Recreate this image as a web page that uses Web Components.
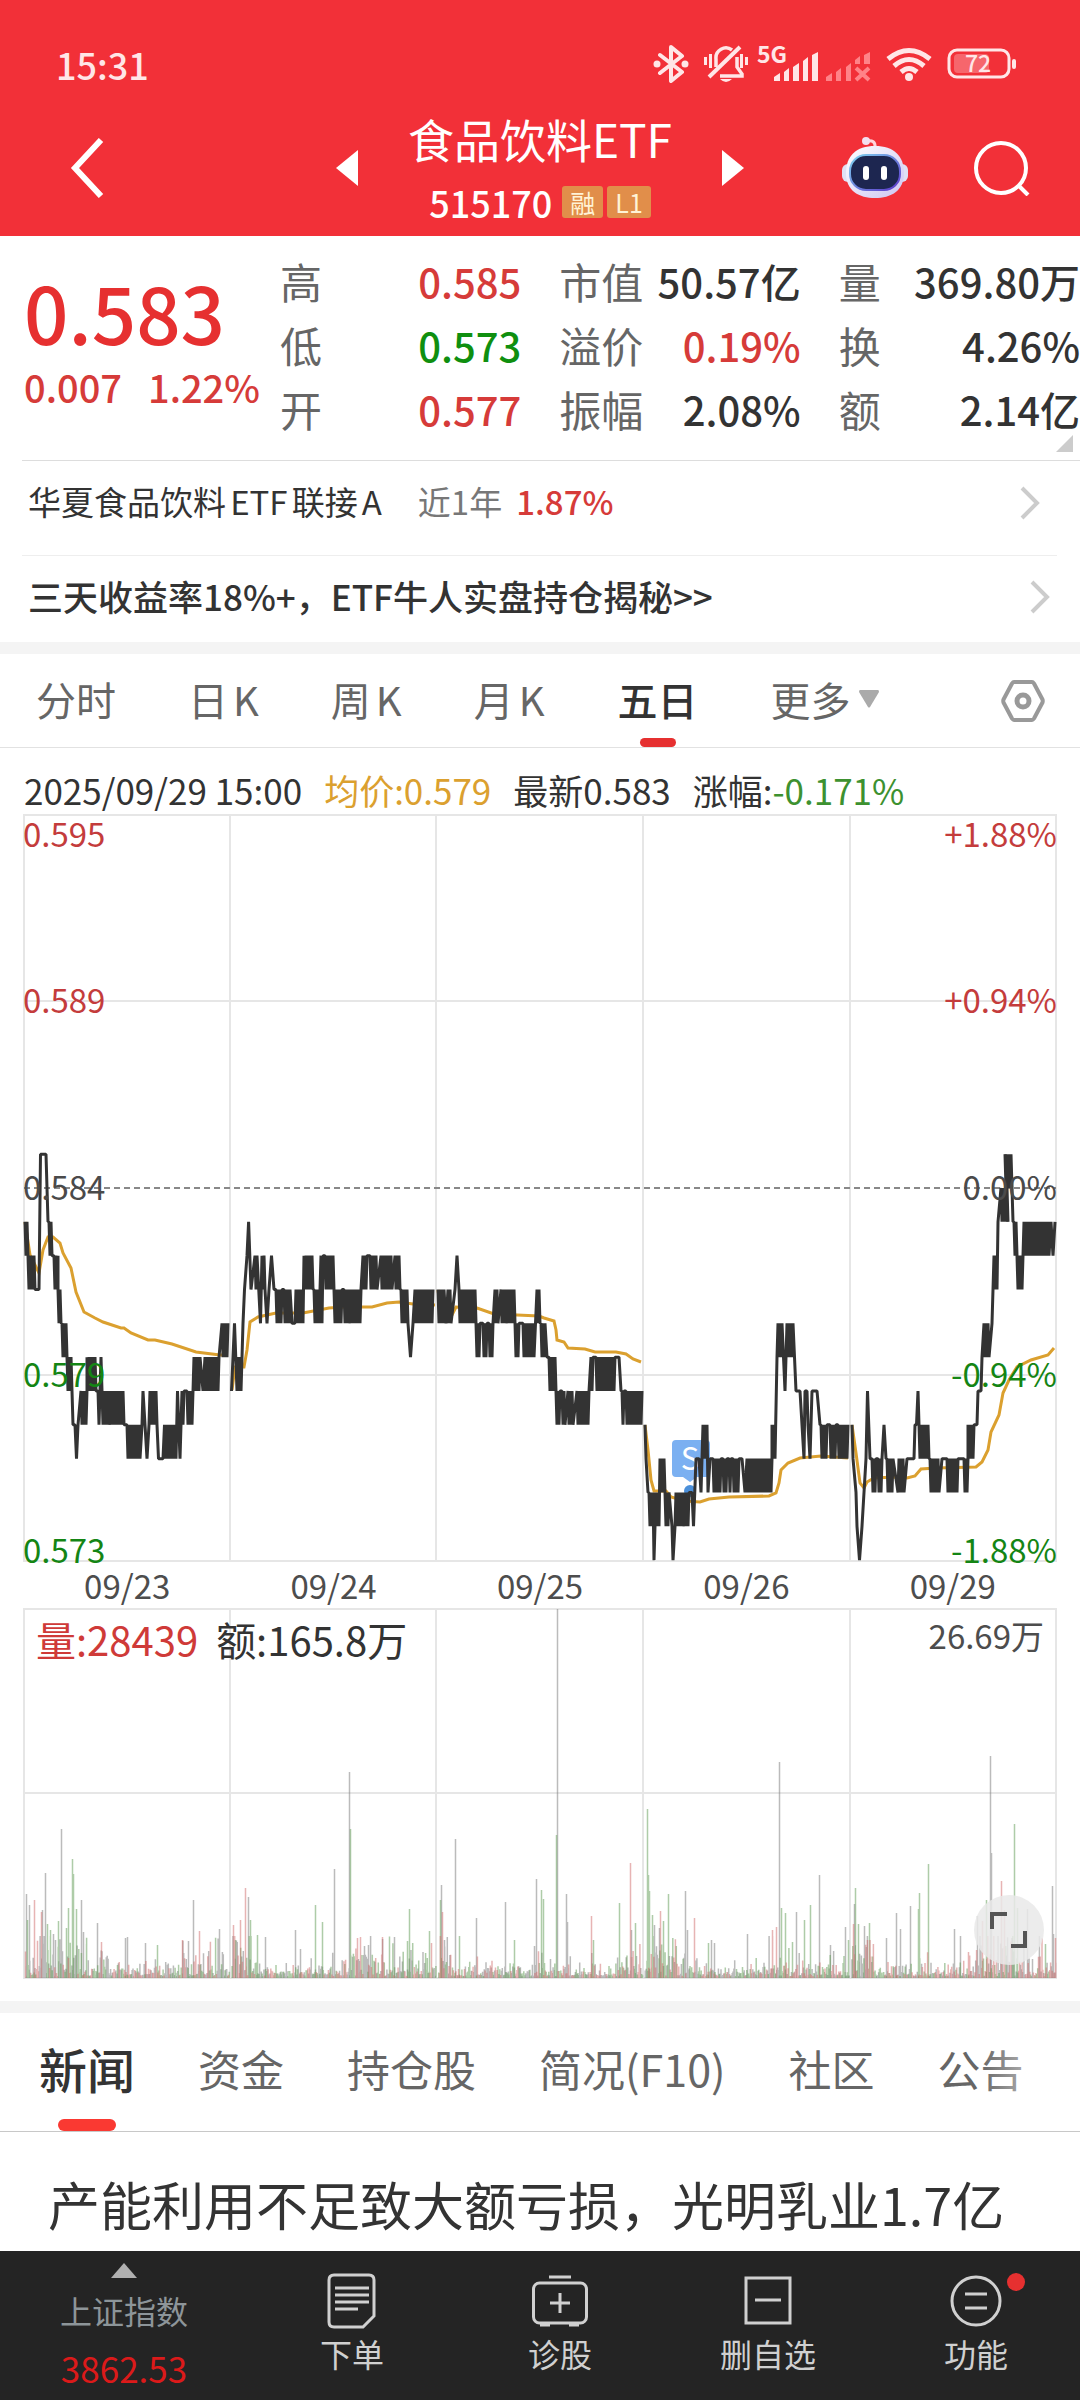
<!DOCTYPE html>
<html lang="zh-CN">
<head>
<meta charset="utf-8">
<meta name="viewport" content="width=device-width, initial-scale=1">
<title>食品饮料ETF 515170</title>
<style>
    body{
        margin: 0;
        height: 100vh;
        display: flex;
        flex-direction: column;
        background: #fff;
        color: #333;
        font-family: "Noto Sans CJK SC", "Noto Sans", sans-serif;
        text-autospace: no-autospace;
    }

    main{
        flex: 1;
        min-height: 0;
        overflow: hidden;
    }
</style>
</head>
<body>
    <stock-header name="食品饮料ETF" code="515170"></stock-header>
    <main>
        <quote-panel price="0.583" change="0.007" percent="1.22%"></quote-panel>
        <promo-row class="fund">华夏食品饮料ETF联接A<span slot="label">近1年</span><span slot="value">1.87%</span></promo-row>
        <promo-row class="tip">三天收益率18%+，ETF牛人实盘持仓揭秘&gt;&gt;</promo-row>
        <section-band></section-band>
        <period-tabs></period-tabs>
        <price-chart></price-chart>
        <volume-chart></volume-chart>
        <section-band></section-band>
        <news-tabs></news-tabs>
        <news-item>产能利用不足致大额亏损，光明乳业1.7亿</news-item>
    </main>
    <bottom-nav></bottom-nav>

<script>
"use strict"

class BaseElement extends HTMLElement{
    constructor(){
        super();

        this.attachShadow({mode: "open"});
    }

    connectedCallback(){
        this.shadowRoot.innerHTML = `${this.styles()} ${this.render()}`;
    }

    resets(){
        return `
        *{ box-sizing: border-box; }
        svg{ display: block; flex: none; }
        button{
            margin: 0;
            padding: 0;
            border: 0;
            background: none;
            color: inherit;
            font: inherit;
            cursor: pointer;
        }
        a{ color: inherit; text-decoration: none; }
        `
    }
}

class StatusBar extends BaseElement{
    render(){
        return `
            <time>15:31</time>
            <div class="icons">
                <svg width="36" height="38" viewBox="0 0 36 38" fill="none" stroke="#ffe6e7" stroke-width="4" stroke-linejoin="round" stroke-linecap="round">
                    <path d="M7 10 L29 27 L18 36 V2 L29 11 L7 28"/>
                    <circle cx="4" cy="19" r="3.5" fill="#ffe6e7" stroke="none"/>
                    <circle cx="32" cy="19" r="3.5" fill="#ffe6e7" stroke="none"/>
                </svg>
                <svg width="44" height="38" viewBox="0 0 44 38" fill="none" stroke="#ffe6e7" stroke-width="3.5">
                    <path d="M12 22 V14 a10 10 0 0 1 16 -9 M33 12 V22 l5 7 v2 H16"/>
                    <path d="M5 32 L36 2" stroke-width="4"/>
                    <path d="M16 34 h12 q-6 6 -12 0z" fill="#ffe6e7" stroke="none"/>
                    <path d="M1.500 12v8 M6.500 9v14 M37.500 9v14 M42.500 12v8" stroke-width="3"/>
                </svg>
                <svg width="108" height="38" viewBox="0 0 108 38" overflow="visible" fill="#ffe6e7">
                    <text x="-6" y="18" font-size="23" font-weight="700">5G</text>
                    <path d="M11 32l6-4v8h-6z M21 27l5-4v13h-5z M30 22l6-4v18h-6z M40 16l5-4v24h-5z M49 10l6-3v29h-6z"/>
                    <g fill="#ff8388">
                        <path d="M63 32l6-4v8h-6z M73 27l5-4v13h-5z M83 22l5-4v18h-5z M92 15l5-4v8h-5z M101 10l6-3v12h-6z"/>
                        <path d="M93 23l13 12M106 23l-13 12" stroke="#ff8388" stroke-width="4"/>
                    </g>
                </svg>
                <svg width="46" height="38" viewBox="0 0 46 38" fill="none" stroke="#ffe6e7" stroke-width="5">
                    <path d="M2 14 q21 -17 42 0 M8 21 q15 -13 30 0 M15 27 q8 -7 16 0"/>
                    <circle cx="23" cy="32" r="4" fill="#ffe6e7" stroke="none"/>
                </svg>
                <svg width="69" height="38" viewBox="0 0 69 38">
                    <rect x="2" y="5" width="60" height="27" rx="8" fill="none" stroke="#ffe6e7" stroke-width="3"/>
                    <rect x="7" y="9" width="35" height="19" rx="4" fill="#f6666c"/>
                    <rect x="65" y="14" width="4" height="10" rx="2" fill="#ffe6e7"/>
                    <text x="31" y="27" font-size="23" font-weight="500" text-anchor="middle" fill="#ffe6e7">72</text>
                </svg>
            </div>
        `
    }

    styles(){
        return `
        <style>
        ${this.resets()}
        :host{
            display: flex;
            justify-content: space-between;
            align-items: center;
            height: 88px;
            padding: 40px 64px 0 56px;
            box-sizing: border-box;
            color: #ffe6e7;
        }

        time{ font-size: 36px; line-height: 48px; font-weight: 500; }
        .icons{ display: flex; gap: 15px; }
        </style>
        `
    }
}

class StockHeader extends BaseElement{
    render(){
        return `
            <status-bar></status-bar>
            <nav>
                <button class="back" aria-label="返回">
                    <svg width="34" height="60" viewBox="0 0 34 60" fill="none" stroke="#fff" stroke-width="6"><path d="M31 2 L5 30 L31 58"/></svg>
                </button>
                <div class="switcher">
                    <button aria-label="上一只"><svg width="22" height="36" viewBox="0 0 22 36" fill="#fff"><path d="M22 0V36L0 18z"/></svg></button>
                    <div class="title">
                        <h1>${this.getAttribute('name')}</h1>
                        <p>${this.getAttribute('code')}<span class="badges"><i>融</i><i>L1</i></span></p>
                    </div>
                    <button aria-label="下一只"><svg width="22" height="36" viewBox="0 0 22 36" fill="#fff"><path d="M0 0V36L22 18z"/></svg></button>
                </div>
                <div class="tools">
                    <button aria-label="智能助手">
                        <svg width="66" height="62" viewBox="0 0 66 62">
                            <defs>
                                <linearGradient id="shell" x1="0" y1="0" x2="1" y2="1">
                                    <stop offset="0" stop-color="#fff"/><stop offset="1" stop-color="#cdc5f2"/>
                                </linearGradient>
                                <linearGradient id="rim" x1="0" y1="0" x2="1" y2="1">
                                    <stop offset="0" stop-color="#7fd4f0"/><stop offset="1" stop-color="#5b35c9"/>
                                </linearGradient>
                            </defs>
                            <path d="M24 4 q10 -2 9 7" fill="none" stroke="#ffd5dc" stroke-width="3"/>
                            <circle cx="24" cy="4" r="4" fill="#f3dff0"/>
                            <rect x="0" y="27" width="66" height="18" rx="6" fill="#dfe0f4"/>
                            <path d="M33 9 C52 9 62 19 62 36 C62 54 49 61 33 61 C17 61 4 54 4 36 C4 19 14 9 33 9z" fill="url(#shell)"/>
                            <rect x="8" y="18" width="50" height="35" rx="16" fill="#1d2650" stroke="url(#rim)" stroke-width="2"/>
                            <rect x="21" y="29" width="6" height="14" rx="3" fill="#fff"/>
                            <rect x="39" y="29" width="6" height="14" rx="3" fill="#fff"/>
                        </svg>
                    </button>
                    <button aria-label="搜索">
                        <svg width="56" height="56" viewBox="0 0 56 56" fill="none" stroke="#fff" stroke-width="4"><circle cx="27" cy="28" r="25"/><path d="M44 45 L54 55"/></svg>
                    </button>
                </div>
            </nav>
        `
    }

    styles(){
        return `
        <style>
        ${this.resets()}
        :host{ display: block; background: #f23038; color: #fff; }

        nav{
            display: grid;
            grid-template-columns: 1fr auto 1fr;
            align-items: center;
            height: 148px;
            padding: 12px 50px 0;
        }

        .back{ justify-self: start; padding-left: 20px; }
        .switcher{ display: flex; align-items: center; gap: 50px; }
        .title{ padding-bottom: 4px; text-align: center; }
        h1{ margin: 0 0 12px; font-size: 46px; line-height: 60px; font-weight: 400; }
        p{
            margin: 0;
            display: flex;
            justify-content: center;
            align-items: center;
            gap: 10px;
            font-size: 36px;
            line-height: 44px;
            font-weight: 500;
        }
        .badges{ display: flex; gap: 4px; }
        i{
            min-width: 40px;
            padding: 0 8px;
            border-radius: 3px;
            background: #e18e4a;
            color: #fff3d6;
            font-size: 25px;
            line-height: 32px;
            font-style: normal;
            font-weight: 400;
        }
        .tools{ display: flex; align-items: center; justify-content: flex-end; gap: 66px; }
        </style>
        `
    }
}

class QuotePanel extends BaseElement{
    render(){
        const cols = [
            [["高", "0.585", "up"], ["低", "0.573", "down"], ["开", "0.577", "up"]],
            [["市值", "50.57亿", ""], ["溢价", "0.19%", "up"], ["振幅", "2.08%", ""]],
            [["量", "369.80万", ""], ["换", "4.26%", ""], ["额", "2.14亿", ""]]
        ];

        return `
            <div class="last">
                <strong>${this.getAttribute('price')}</strong>
                <p><span>${this.getAttribute('change')}</span><span>${this.getAttribute('percent')}</span></p>
            </div>
            ${cols.map(col => `
                <dl>${col.map(([k, v, c]) => `<div><dt>${k}</dt><dd class="${c}">${v}</dd></div>`).join("")}</dl>
            `).join("")}
            <svg class="more" width="17" height="17" viewBox="0 0 17 17" fill="#ccc"><path d="M17 0V17H0z"/></svg>
        `
    }

    styles(){
        return `
        <style>
        ${this.resets()}
        :host{
            position: relative;
            display: grid;
            grid-template-columns: 242px 1fr 1fr 1fr;
            column-gap: 38px;
            padding: 13px 0 19px;
        }

        .last{ padding: 18px 0 0 24px; color: #e63030; white-space: nowrap; }
        strong{ display: block; font-size: 78px; line-height: 88px; font-weight: 500; }
        p{
            margin: 8px 0 0;
            display: flex;
            gap: 26px;
            font-size: 38px;
            line-height: 48px;
            font-weight: 500;
            color: #d63b39;
        }
        dl{ margin: 0; }
        dl div{ display: flex; justify-content: space-between; line-height: 64px; white-space: nowrap; }
        dt{ font-size: 42px; color: #666; }
        dd{ margin: 0; font-size: 40px; font-weight: 500; }
        .up{ color: #d63b39; }
        .down{ color: #0f8f0f; }
        .more{ position: absolute; right: 7px; bottom: 8px; }
        </style>
        `
    }
}

class PromoRow extends BaseElement{
    render(){
        return `
            <a href="#">
                <span class="text"><slot></slot><slot name="label"></slot><slot name="value"></slot></span>
                <svg width="20" height="34" viewBox="0 0 20 34" fill="none" stroke="#ccc" stroke-width="4"><path d="M2 2 L17 17 L2 32"/></svg>
            </a>
        `
    }

    styles(){
        return `
        <style>
        ${this.resets()}
        :host{ display: block; margin-left: 22px; border-top: 1px solid #ddd; }
        :host(.fund){ text-autospace: normal; }
        :host(.tip){ margin-right: 23px; border-color: #eee; }

        a{
            display: flex;
            align-items: center;
            justify-content: space-between;
            height: 94px;
            padding: 0 40px 10px 6px;
            font-size: 33px;
            white-space: nowrap;
        }
        :host(.tip) a{
            height: 86px;
            padding: 0 7px 4px 6px;
            font-size: 35px;
            font-weight: 500;
        }
        .text{ padding-bottom: 4px; }
        ::slotted([slot="label"]){ margin-left: 36px; color: #777; text-autospace: no-autospace; }
        ::slotted([slot="value"]){ margin-left: 14px; color: #d63b39; font-weight: 500; }
        </style>
        `
    }
}

class SectionBand extends BaseElement{
    render(){
        return ``
    }

    styles(){
        return `
        <style>
        :host{ display: block; height: 12px; background: #f4f4f4; }
        </style>
        `
    }
}

class PeriodTabs extends BaseElement{
    render(){
        return `
            <button>分时</button>
            <button>日K</button>
            <button>周K</button>
            <button>月K</button>
            <button class="on">五日</button>
            <button class="drop">更多<svg width="20" height="18" viewBox="0 0 20 18" fill="#aaa"><path d="M1 0H19Q20 0 20 2L11 17Q10 18 9 17L0 2Q0 0 1 0z"/></svg></button>
            <button class="set" aria-label="设置">
                <svg width="44" height="42" viewBox="0 0 44 42" fill="none" stroke="#999" stroke-width="4" stroke-linejoin="round">
                    <path d="M13 2H31Q32 2 33 3.500L41.500 19.500Q42 21 41.500 22.500L33 38.500Q32 40 31 40H13Q12 40 11 38.500L2.500 22.500Q2 21 2.500 19.500L11 3.500Q12 2 13 2z"/>
                    <circle cx="22" cy="21" r="6" stroke-width="5"/>
                </svg>
            </button>
        `
    }

    styles(){
        return `
        <style>
        ${this.resets()}
        :host{
            display: flex;
            gap: 73px;
            height: 93px;
            padding: 0 35px 0 36px;
            border-bottom: 1px solid #e2e2e2;
            font-size: 40px;
            color: #666;
            text-autospace: normal;
        }

        button{ position: relative; padding-bottom: 4px; white-space: nowrap; }
        button:nth-child(n + 2):nth-child(-n + 4){ margin-right: -1px; }
        .on{ color: #333; font-weight: 500; }
        .on::after{
            content: "";
            position: absolute;
            left: 50%;
            bottom: 0;
            width: 36px;
            height: 9px;
            margin-left: -18px;
            border-radius: 5px;
            background: #e63030;
        }
        .drop{ display: flex; align-items: center; gap: 8px; }
        .set{ margin-left: auto; padding: 0; }
        </style>
        `
    }
}

// price path: "x,level" is a point, "x-x2,a/b" swings between two price levels
const PRICE = [
    "1-4,1/2 4-11,2/3 12,3 15,3 16.5,-1 22,-1 24,1 25-28,1/2 30-34,2/3 34-37,3/4 38-42,4/5 43-48,5/6 49,7 51,7 52.5,8 54,7 57-63,6/7 63-72,5/6 74-76,6/7 77,5 78-85,6/7 87-100,6/7 103-116,7/8 118,7 119,6 121,7 123,8 125,7 126-133,6/7 134.5,8 139,8 140.5,7 142,8 143-152,7/8 153.5,6 156,8 158-160,6/7 163-168,6/7 170-176,5/6 179,6 181-195,5/6 198-204,4/5",
    "207.5,6 210.5,4 213,6 214-218,5/6 219,4 220.5,3 223,2 224.6,1 227,3 231-233,2/3 236.5,4 238-241,2/3 243,4 245,3 247.5,2 250,3 252-258,3/4 260-266,3/4 268,4 271,4 272-279,3/4 280-289,2/3 290-296,3/4 297-299,2/4 301-309,2/3 310-318,3/4 320-325,3/4 327-337,3/4 339-343,2/3 346-353,2/3 357-368,2/3 371-376,2/3 377-384,3/4 386.5,5 389,4 391-409,3/4",
    "414-420,3/4 422,4 424-427,3/4 431,3 433,2 435-451,3/4 452-456,4/5 459-463,4/5 465-469,4/5 471-474,3/4 477-482,3/4 484-490,3/4 491-495,4/5 497,4 499-510,4/5 513-516,3/4 517-521,4/5 523,5 525-532,5/6 532-536,6/7 538-541,6/7 544-549,6/7 553-565,6/7 567-569,5/6 572-579,5/6 581-591,5/6 595,5 597,6 598-600,6/7 602-618,6/7",
    "621,7 622,8 624,9 625-629,9/10 630,11 632-635,9/10 636-640,8/9 641-645,9/10 648,10 649,11 651,10 652-659,9/10 661-665,9/10 668,9 669.5,10 672,8 675,8 677,9 679-683,7/8 684,9 686,8 689-697,8/9 699-703,8/9 705-707,8/9 709-715,8/9 718,8 721,9 723-736,8/9 738-748,8/9 748-751,7/8 753,5 754-758,4/5 761,6 763-769,4/5 772,6 776,6 778,7 780,8 781,6 783-784,6/7 786,8 788,6 793,6 796,7 797-803,7/8 806-812,7/8 814-824,7/8",
    "828,7 829,8 832,9 833,10 835.5,11 838,10 840,9 842,8 843.5,6 846,8 848-852,8/9 854-857,8/9 858,8 860,7 862,8 863-869,8/9 874,9 875-880,8/9 883,8 890,8 891,7 892.5,7 894,6 895-898,7/8 900-905,7/8 906-915,8/9 918,8 922,8 923-928,8/9 930-934,8/9 938,8 940-944,8/9 944-950,7/8 953,7 954,6 957,6 958,5 960-965,4/5 968,4 969,3 970-973,2/3 974,1 977-984,0/1 981-987,-1/0 988,0 989,1 990-992,1/2 993-999,2/3 1000-1025,1/2 1027,1 1029,2 1031,1"
];

const AVERAGE = [
    "1,407 6,440 15,458 19,435 24,422 29,422 36,428 39,438 47,453 52,477 60,497 71,503 79,507 97,513 100,513 107,518 124,525 131,525 148,529 172,537 196,540 204,540",
    "208,575 211,552 220,552 223,535 226,507 234,502 252,498 279,498 305,493 320,492 348,492 363,488 375,487 389,489 411,490",
    "414,475 417,497 428,500 432,492 453,493 470,499 493,500 515,501 520,503 530,506 532,515 533,525 540,527 544,533 561,534 571,537 592,537 602,539 609,544 617,547",
    "621,610 624,635 627,665 630,676 642,676 647,682 661,686 676,687 685,684 705,682 745,681 752,678 755,668 757,655 764,648 776,643 797,641 824,643",
    "828,610 832,638 836,668 840,673 843,667 850,663 871,662 883,663 891,661 897,654 912,653 952,652 958,647 964,635 967,617 975,600 979,578 985,565 993,552 1007,545 1024,540 1030,533"
];

class PriceChart extends BaseElement{
    levelY(level){
        return 373 + level * 33.83;
    }

    pricePoints(day){
        const points = [];

        for(const token of day.split(" ")){
            const [xs, levels] = token.split(",");
            const [from, to] = xs.split("-").map(Number);
            if(to === undefined){
                points.push([from, this.levelY(Number(levels))]);
                continue;
            }
            const [high, low] = levels.split("/").map(Number);
            let top = true;
            for(let x = from; x <= to; x += 1){
                points.push([x, this.levelY(top ? high : low)]);
                top = !top;
            }
        }

        return points.map(p => p.join(",")).join(" ");
    }

    render(){
        const labels = [
            [20, "0.595", "+1.88%", "#c43c3c"],
            [186, "0.589", "+0.94%", "#c43c3c"],
            [373, "0.584", "0.00%", "#4a4a4a"],
            [560, "0.579", "-0.94%", "#148514"],
            [736, "0.573", "-1.88%", "#148514"]
        ];

        return `
            <p>
                <span>2025/09/29 15:00</span>
                <span class="avg">均价:0.579</span>
                <span>最新0.583</span>
                <span>涨幅:<b>-0.171%</b></span>
            </p>
            <svg viewBox="0 0 1032 746" overflow="visible">
                <g stroke="#e6e6e6" stroke-width="2" fill="none">
                    <path d="M0 0H1032V746H0z M0 186H1032 M0 560H1032 M206 0V746 M412 0V746 M619 0V746 M826 0V746"/>
                    <path d="M0 373H1032" stroke="#888" stroke-dasharray="6 4"/>
                </g>
                <g>
                    <path d="M652 625h30q4 0 4 4v29q0 4-4 4h-9l-7 5l-7-5h-7q-4 0-4-4v-29q0-4 4-4z" fill="#7bb0f1"/>
                    <circle cx="666" cy="676" r="6" fill="#4b8fd9"/>
                    <text x="666" y="655" font-size="31" text-anchor="middle" fill="#fff">S</text>
                </g>
                ${AVERAGE.map(day => `<polyline points="${day}" fill="none" stroke="#dba02f" stroke-width="3"/>`).join("")}
                ${PRICE.map(day => `<polyline points="${this.pricePoints(day)}" fill="none" stroke="#333" stroke-width="3" stroke-linejoin="bevel"/>`).join("")}
                <g font-size="33">
                    ${labels.map(([y, price, rate, color]) => `
                        <text x="-1" y="${y + 12}" fill="${color}">${price}</text>
                        <text x="1033" y="${y + 12}" fill="${color}" text-anchor="end">${rate}</text>
                    `).join("")}
                </g>
            </svg>
            <div class="days">
                <time>09/23</time><time>09/24</time><time>09/25</time><time>09/26</time><time>09/29</time>
            </div>
        `
    }

    styles(){
        return `
        <style>
        ${this.resets()}
        :host{ display: block; padding: 17px 24px 0; }

        p{
            margin: 0;
            display: flex;
            gap: 22px;
            font-size: 35px;
            line-height: 50px;
            white-space: nowrap;
        }
        .avg{ color: #dba02f; }
        b{ font-weight: 400; color: #3d9130; }
        svg{ width: 100%; }
        .days{
            display: grid;
            grid-template-columns: repeat(5, 1fr);
            text-align: center;
            font-size: 33px;
            line-height: 48px;
            color: #4d4d4d;
        }
        </style>
        `
    }
}

// single large trades: x, height, colour (k = flat, g = sell, r = buy)
const SPIKES = "2,84k 3,58g 5,73k 10,78r 17,66r 18,68k 21,105k 23,54g 26,48g 29,44k 31,38k 34,57g 37,149k 42,50g 44,70g 48,119g 49,104g 52,69g 57,78k 59,46k 62,34g 73,55k 77,36r 101,40k 103,41k 121,35k 133,33g 158,38r 164,37k 169,78k 175,47r 195,49k " +
    "209,53r 211,38g 216,58r 221,90r 224,81k 226,58g 233,43g 241,41k 271,48k 276,29k 291,73g 298,56g 310,109k 325,206k 326,149g 333,40r 336,41r 344,33k 358,41r 370,41k 383,37g 385,69g 405,47g 407,35r " +
    "416,78g 417,93k 418,66r 420,38k 431,139k 435,42g 452,60k 481,76k 490,38g 510,32k 512,99k 517,88g 519,79g 532,143g 533,369k 542,84k 543,56k 567,62r 569,38g 595,75g 606,115r 607,48k 611,55g " +
    "623,169g 624,103g 625,87g 628,63g 630,53k 635,50k 636,67r 639,57g 644,84g 661,87k 663,48k 670,60r 684,35g 687,38k 690,35k 723,44k 748,48r 752,51r 755,216k 757,70g 761,65g 768,36g 772,66k 780,58g 786,73g 795,103k 806,33k 821,51k 824,38g " +
    "829,54r 830,74k 831,90g 834,54g 840,52k 843,38r 845,55g 862,40k 872,65k 876,49k 886,72k 894,69g 895,85g 904,114g 930,49k 936,42k 944,26r 953,62k 958,57r 962,78g 966,222k 967,125k 977,97r 980,68r 990,154g 993,70g 1003,69k 1021,34g 1028,92k 1029,44k 1031,40r";

// busy stretches of the session: from, to, usual height
const ACTIVITY = [[0, 64, 28], [64, 96, 15], [158, 204, 17], [206, 228, 30], [320, 411, 19], [413, 424, 28], [510, 522, 20], [600, 617, 20], [620, 656, 28], [745, 766, 26], [826, 850, 25], [952, 990, 38], [990, 1032, 18]];

class VolumeChart extends BaseElement{
    bars(){
        const colors = {k: "#777", g: "#5d9a52", r: "#cf6a6a"};
        const paths = {k: "", g: "", r: ""};
        let seed = 28439;
        const random = () => (seed = (seed * 16807) % 2147483647) / 2147483647;

        for(let day = 0; day < 5; day++){
            for(let i = 0; i < 238; i++){
                const x = day * 206.6 + 1.5 + i * 0.86;
                const busy = ACTIVITY.find(([from, to]) => x >= from && x < to);
                const mean = busy ? busy[2] : 9;
                const height = 2 + Math.min(-Math.log(random() + 0.01) * mean * 0.6, 40);
                const kind = random() < 0.45 ? "k" : random() < 0.5 ? "g" : "r";
                paths[kind] += `M${x.toFixed(1)} 369v-${height.toFixed(1)}`;
            }
        }

        for(const spike of SPIKES.split(" ")){
            const [x, value] = spike.split(",");
            paths[value.slice(-1)] += `M${x}.500 369v-${value.slice(0, -1)}`;
        }

        return Object.keys(paths).map(kind => `<path d="${paths[kind]}" stroke="${colors[kind]}"/>`).join("");
    }

    render(){
        return `
            <svg viewBox="0 0 1032 369" overflow="visible" fill="none">
                <path d="M0 0H1032V369H0z M0 184H1032 M206 0V369 M412 0V369 M619 0V369 M826 0V369" stroke="#e6e6e6" stroke-width="2"/>
                <g stroke-width="1.500" stroke-opacity="0.5">${this.bars()}</g>
            </svg>
            <p><span class="vol">量:28439</span><span>额:165.8万</span><small>26.69万</small></p>
            <button aria-label="全屏">
                <svg width="70" height="70" viewBox="0 0 70 70" fill="none" stroke="#555" stroke-width="4"><path d="M18 34V19H33 M37 51H51V36"/></svg>
            </button>
        `
    }

    styles(){
        return `
        <style>
        ${this.resets()}
        :host{ position: relative; display: block; padding: 0 24px 23px; }

        svg{ width: 100%; }
        p{
            position: absolute;
            top: 0;
            left: 36px;
            right: 36px;
            margin: 0;
            display: flex;
            gap: 18px;
            font-size: 40px;
            line-height: 60px;
        }
        .vol{ color: #cf3a38; }
        small{ margin-left: auto; font-size: 33px; line-height: 52px; color: #4d4d4d; }
        button{
            position: absolute;
            right: 36px;
            bottom: 36px;
            border-radius: 50%;
            background: rgba(233, 233, 233, 0.85);
        }
        button svg{ width: 70px; }
        </style>
        `
    }
}

class NewsTabs extends BaseElement{
    render(){
        return `
            <button class="on">新闻</button>
            <button>资金</button>
            <button>持仓股</button>
            <button>简况(F10)</button>
            <button>社区</button>
            <button>公告</button>
        `
    }

    styles(){
        return `
        <style>
        ${this.resets()}
        :host{
            position: relative;
            display: flex;
            gap: 63px;
            height: 118px;
            padding-left: 39px;
            border-bottom: 1px solid #c8c8c8;
            overflow: hidden;
            font-size: 43px;
            color: #666;
        }
        :host::after{
            content: "";
            position: absolute;
            top: 0;
            right: 0;
            width: 100px;
            height: 100%;
            background: linear-gradient(to right, rgba(255, 255, 255, 0), #fff);
        }

        button{ position: relative; flex: none; padding-bottom: 8px; white-space: nowrap; }
        .on{ font-size: 48px; font-weight: 500; color: #333; }
        .on::after{
            content: "";
            position: absolute;
            left: 50%;
            bottom: 0;
            width: 58px;
            height: 12px;
            margin-left: -29px;
            border-radius: 6px;
            background: #fa3932;
        }
        </style>
        `
    }
}

class NewsItem extends BaseElement{
    render(){
        return `<a href="#"><slot></slot></a>`
    }

    styles(){
        return `
        <style>
        ${this.resets()}
        :host{ display: block; padding: 36px 48px; }
        a{ font-size: 52px; line-height: 72px; white-space: nowrap; }
        </style>
        `
    }
}

class BottomNav extends BaseElement{
    render(){
        return `
            <button class="index">
                <svg width="26" height="15" viewBox="0 0 26 15" fill="#b0b0b0"><path d="M13 0L26 15H0z"/></svg>
                <span>上证指数</span>
                <b>3862.53</b>
            </button>
            <button>
                <svg width="56" height="56" viewBox="0 0 56 56" fill="none" stroke="#d0d0d0" stroke-width="3">
                    <path d="M10 2H45Q50 2 50 7V43L39 54H10Q5 54 5 49V7Q5 2 10 2z"/>
                    <path d="M11 15H45 M11 22H45 M11 29H45 M11 36H34"/>
                </svg>
                <span>下单</span>
            </button>
            <button>
                <svg width="56" height="56" viewBox="0 0 56 56" fill="none" stroke="#d0d0d0" stroke-width="3">
                    <rect x="1.500" y="10" width="53" height="40" rx="6"/>
                    <path d="M17 4H39 M28 20V40 M18 30H38 M8 52H18 M37 52H47"/>
                </svg>
                <span>诊股</span>
            </button>
            <button>
                <svg width="56" height="56" viewBox="0 0 56 56" fill="none" stroke="#d0d0d0" stroke-width="3">
                    <rect x="6" y="5" width="44" height="45"/>
                    <path d="M15 27H41"/>
                </svg>
                <span>删自选</span>
            </button>
            <button>
                <svg width="56" height="56" viewBox="0 0 56 56" overflow="visible" fill="none" stroke="#d0d0d0" stroke-width="3">
                    <circle cx="28" cy="28" r="24"/>
                    <path d="M17 21H39 M17 35H39"/>
                    <circle cx="68" cy="9" r="9" fill="#e63030" stroke="none"/>
                </svg>
                <span>功能</span>
            </button>
        `
    }

    styles(){
        return `
        <style>
        ${this.resets()}
        :host{
            display: grid;
            grid-template-columns: 248fr 208fr 208fr 208fr 208fr;
            height: 149px;
            background: #242424;
            color: #d0d0d0;
            font-size: 32px;
        }

        button{
            display: flex;
            flex-direction: column;
            align-items: center;
            gap: 2px;
            padding-top: 22px;
            line-height: 44px;
        }
        .index{ gap: 10px; padding-top: 12px; color: #8d9599; }
        b{ font-size: 35px; line-height: 52px; font-weight: 400; color: #dc1a1a; }
        </style>
        `
    }
}

customElements.define('status-bar', StatusBar);
customElements.define('stock-header', StockHeader);
customElements.define('quote-panel', QuotePanel);
customElements.define('promo-row', PromoRow);
customElements.define('section-band', SectionBand);
customElements.define('period-tabs', PeriodTabs);
customElements.define('price-chart', PriceChart);
customElements.define('volume-chart', VolumeChart);
customElements.define('news-tabs', NewsTabs);
customElements.define('news-item', NewsItem);
customElements.define('bottom-nav', BottomNav);
</script>
</body>
</html>
